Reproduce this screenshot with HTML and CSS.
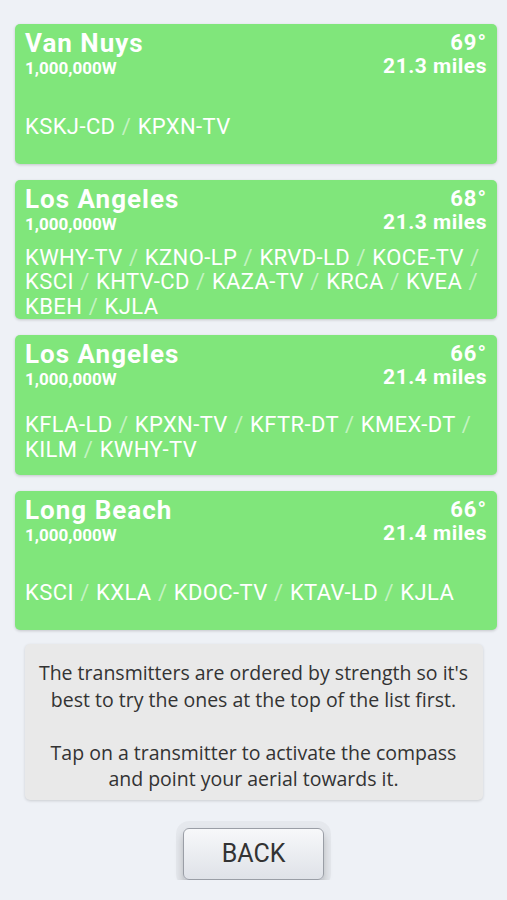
FILE: index.html
```html
<!DOCTYPE html>
<html lang="en">
<head>
    <meta charset="UTF-8">
    <meta name="viewport" content="width=device-width, initial-scale=1.0">
    <title>Transmitters</title>
    <link rel="stylesheet" href="styles.css">
</head>
<body>
    <div id="container">
        <div class="card">
            <div class="cardHeader">
                <div>
                    <h2 class="town">Van Nuys</h2>
                    <p class="power">1,000,000W</p>
                </div>
                <div class="info">
                    <p class="bearing">69°</p>
                    <p class="distance">21.3 miles</p>
                </div>
            </div>
            <div class="stations">
                <p>KSKJ-CD <span class="sep">/</span> KPXN-TV</p>
            </div>
        </div>
        <div class="card">
            <div class="cardHeader">
                <div>
                    <h2 class="town">Los Angeles</h2>
                    <p class="power">1,000,000W</p>
                </div>
                <div class="info">
                    <p class="bearing">68°</p>
                    <p class="distance">21.3 miles</p>
                </div>
            </div>
            <div class="stations">
                <p>KWHY-TV <span class="sep">/</span> KZNO-LP <span class="sep">/</span> KRVD-LD <span class="sep">/</span> KOCE-TV <span class="sep">/</span> KSCI <span class="sep">/</span> KHTV-CD <span class="sep">/</span> KAZA-TV <span class="sep">/</span> KRCA <span class="sep">/</span> KVEA <span class="sep">/</span> KBEH <span class="sep">/</span> KJLA</p>
            </div>
        </div>
        <div class="card">
            <div class="cardHeader">
                <div>
                    <h2 class="town">Los Angeles</h2>
                    <p class="power">1,000,000W</p>
                </div>
                <div class="info">
                    <p class="bearing">66°</p>
                    <p class="distance">21.4 miles</p>
                </div>
            </div>
            <div class="stations">
                <p>KFLA-LD <span class="sep">/</span> KPXN-TV <span class="sep">/</span> KFTR-DT <span class="sep">/</span> KMEX-DT <span class="sep">/</span> KILM <span class="sep">/</span> KWHY-TV</p>
            </div>
        </div>
        <div class="card">
            <div class="cardHeader">
                <div>
                    <h2 class="town">Long Beach</h2>
                    <p class="power">1,000,000W</p>
                </div>
                <div class="info">
                    <p class="bearing">66°</p>
                    <p class="distance">21.4 miles</p>
                </div>
            </div>
            <div class="stations">
                <p>KSCI <span class="sep">/</span> KXLA <span class="sep">/</span> KDOC-TV <span class="sep">/</span> KTAV-LD <span class="sep">/</span> KJLA</p>
            </div>
        </div>
    </div>
    <div class="help">
        The transmitters are ordered by strength so it's best to try the ones at the top of the list first.<br><br>
        Tap on a transmitter to activate the compass and point your aerial towards it.
    </div>
    <div class="backWrap">
        <button class="backButton">BACK</button>
    </div>
</body>
</html>
```

FILE: styles.css
```css
:root {
    --card-color: #80e67b;
    --page-color: #eef1f6;
    --text-dark: #333333;
}
body {
    margin: 0;
    background-color: var(--page-color);
    font-family: Roboto, 'Liberation Sans', sans-serif;
}
p, h2 {
    margin: 0;
}
#container {
    padding: 24px 10px 0 15px;
    display: flex;
    flex-direction: column;
    gap: 16px;
}
.card {
    height: 139.5px;
    box-sizing: border-box;
    background: var(--card-color);
    border-radius: 5px;
    box-shadow: 0 1px 3px rgba(0, 0, 0, 0.18);
    padding: 6px 11px 0 10px;
    color: white;
    display: flex;
    flex-direction: column;
}
.cardHeader {
    display: flex;
    justify-content: space-between;
}
.town {
    font-size: 26px;
    line-height: 26px;
    font-weight: bold;
    letter-spacing: 1px;
}
.power {
    font-size: 17px;
    line-height: 25px;
    font-weight: bold;
}
.info {
    text-align: right;
    font-weight: bold;
    margin-right: -1px;
}
.bearing {
    font-size: 22px;
    line-height: 25px;
    letter-spacing: 1px;
}
.distance {
    font-size: 21px;
    line-height: 23px;
    letter-spacing: 0.5px;
}
.stations {
    flex: 1;
    display: flex;
    align-items: center;
    padding-top: 9px;
    font-size: 22px;
    line-height: 24.5px;
    letter-spacing: 0.4px;
    word-spacing: 0.5px;
}
.sep {
    color: rgba(255, 255, 255, 0.55);
}
.help {
    margin: 14px auto 0;
    width: 458px;
    box-sizing: border-box;
    padding: 16px 8px 7px;
    background: #e9e9e9;
    border-radius: 5px;
    box-shadow: 0 1px 3px rgba(0, 0, 0, 0.15);
    color: var(--text-dark);
    font-family: 'Open Sans', sans-serif;
    font-size: 19.5px;
    line-height: 26.5px;
    text-align: center;
}
.backWrap {
    display: flex;
    justify-content: center;
    padding-top: 28px;
}
.backButton {
    width: 141px;
    height: 52px;
    border: 1px solid #9a9ea6;
    border-radius: 6px;
    background: linear-gradient(#f7f8fa, #dfe2e8);
    box-shadow: 0 0 0 7px rgba(0, 0, 0, 0.035), 0 6px 8px rgba(0, 0, 0, 0.22);
    color: #333;
    font-family: Roboto, sans-serif;
    font-size: 25px;
}
```
